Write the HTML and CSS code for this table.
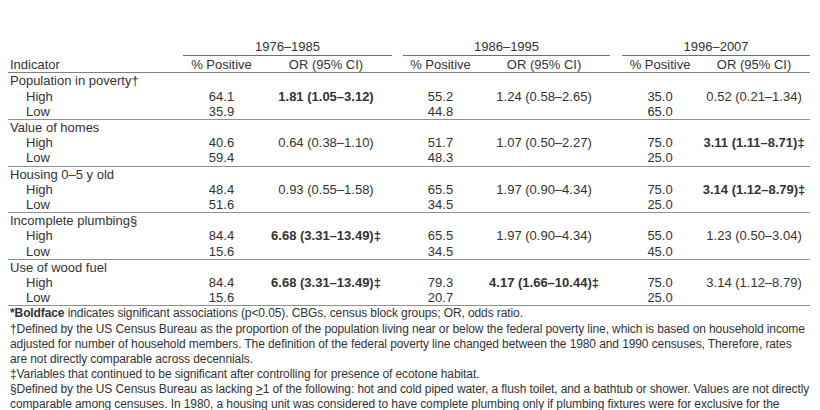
FILE: index.html
```html
<!DOCTYPE html>
<html>
<head>
<meta charset="utf-8">
<link rel="stylesheet" href="styles.css">
</head>
<body>
<div class="page">
<table class="data">
  <colgroup>
    <col class="c-ind"><col class="c-pos1"><col class="c-or1"><col class="c-gap1">
    <col class="c-pos2"><col class="c-or2"><col class="c-gap2"><col class="c-pos3"><col class="c-or3">
  </colgroup>
  <thead>
    <tr class="years">
      <th></th>
      <th colspan="2" class="year">1976–1985</th>
      <th></th>
      <th colspan="2" class="year">1986–1995</th>
      <th></th>
      <th colspan="2" class="year">1996–2007</th>
    </tr>
    <tr class="cols">
      <th class="ind">Indicator</th>
      <th>% Positive</th><th>OR (95% CI)</th><th></th>
      <th>% Positive</th><th>OR (95% CI)</th><th></th>
      <th>% Positive</th><th>OR (95% CI)</th>
    </tr>
  </thead>
  <tbody>
    <tr><td class="ind">Population in poverty†</td><td></td><td></td><td></td><td></td><td></td><td></td><td></td><td></td></tr>
    <tr><td class="sub">High</td><td>64.1</td><td><b>1.81 (1.05–3.12)</b></td><td></td><td>55.2</td><td>1.24 (0.58–2.65)</td><td></td><td>35.0</td><td>0.52 (0.21–1.34)</td></tr>
    <tr class="last"><td class="sub">Low</td><td>35.9</td><td></td><td></td><td>44.8</td><td></td><td></td><td>65.0</td><td></td></tr>

    <tr><td class="ind">Value of homes</td><td></td><td></td><td></td><td></td><td></td><td></td><td></td><td></td></tr>
    <tr><td class="sub">High</td><td>40.6</td><td>0.64 (0.38–1.10)</td><td></td><td>51.7</td><td>1.07 (0.50–2.27)</td><td></td><td>75.0</td><td><b>3.11 (1.11–8.71)‡</b></td></tr>
    <tr class="last"><td class="sub">Low</td><td>59.4</td><td></td><td></td><td>48.3</td><td></td><td></td><td>25.0</td><td></td></tr>

    <tr><td class="ind">Housing 0–5 y old</td><td></td><td></td><td></td><td></td><td></td><td></td><td></td><td></td></tr>
    <tr><td class="sub">High</td><td>48.4</td><td>0.93 (0.55–1.58)</td><td></td><td>65.5</td><td>1.97 (0.90–4.34)</td><td></td><td>75.0</td><td><b>3.14 (1.12–8.79)‡</b></td></tr>
    <tr class="last"><td class="sub">Low</td><td>51.6</td><td></td><td></td><td>34.5</td><td></td><td></td><td>25.0</td><td></td></tr>

    <tr><td class="ind">Incomplete plumbing§</td><td></td><td></td><td></td><td></td><td></td><td></td><td></td><td></td></tr>
    <tr><td class="sub">High</td><td>84.4</td><td><b>6.68 (3.31–13.49)‡</b></td><td></td><td>65.5</td><td>1.97 (0.90–4.34)</td><td></td><td>55.0</td><td>1.23 (0.50–3.04)</td></tr>
    <tr class="last"><td class="sub">Low</td><td>15.6</td><td></td><td></td><td>34.5</td><td></td><td></td><td>45.0</td><td></td></tr>

    <tr><td class="ind">Use of wood fuel</td><td></td><td></td><td></td><td></td><td></td><td></td><td></td><td></td></tr>
    <tr><td class="sub">High</td><td>84.4</td><td><b>6.68 (3.31–13.49)‡</b></td><td></td><td>79.3</td><td><b>4.17 (1.66–10.44)‡</b></td><td></td><td>75.0</td><td>3.14 (1.12–8.79)</td></tr>
    <tr class="last"><td class="sub">Low</td><td>15.6</td><td></td><td></td><td>20.7</td><td></td><td></td><td>25.0</td><td></td></tr>
  </tbody>
</table>
<div class="notes">
  <p><b>*Boldface</b> indicates significant associations (p&lt;0.05). CBGs, census block groups; OR, odds ratio.</p>
  <p>†Defined by the US Census Bureau as the proportion of the population living near or below the federal poverty line, which is based on household income<br>adjusted for number of household members. The definition of the federal poverty line changed between the 1980 and 1990 censuses, Therefore, rates<br>are not directly comparable across decennials.</p>
  <p>‡Variables that continued to be significant after controlling for presence of ecotone habitat.</p>
  <p>§Defined by the US Census Bureau as lacking <u>&gt;</u>1 of the following: hot and cold piped water, a flush toilet, and a bathtub or shower. Values are not directly<br>comparable among censuses. In 1980, a housing unit was considered to have complete plumbing only if plumbing fixtures were for exclusive for the</p>
</div>
</div>
</body>
</html>
```

FILE: styles.css
```css
html, body {
  margin: 0;
  padding: 0;
  background: #ffffff;
}

body {
  font-family: "Liberation Sans", Arial, sans-serif;
  font-size: 13px;
  color: #333333;
}

.page {
  padding: 39px 0 0 8px;
  width: 812px;
}

.data {
  border-collapse: separate;
  border-spacing: 0;
  table-layout: fixed;
  width: 802px;
  line-height: 15.2px;
}

.c-ind { width: 175px; }
.c-pos1 { width: 77px; }
.c-or1 { width: 132px; }
.c-gap1 { width: 11px; }
.c-pos2 { width: 75px; }
.c-or2 { width: 132px; }
.c-gap2 { width: 12px; }
.c-pos3 { width: 76px; }
.c-or3 { width: 112px; }

.data th,
.data td {
  padding: 0;
  font-weight: normal;
  text-align: center;
  white-space: nowrap;
}

.data th.ind,
.data td.ind {
  text-align: left;
  padding-left: 2px;
}

.data td.sub {
  text-align: left;
  padding-left: 18px;
}

.data b {
  font-weight: bold;
}

.years th {
  padding-bottom: 1px;
}

.years th.year {
  border-bottom: 1px solid #6f6f6f;
}

.cols th {
  border-bottom: 1px solid #808080;
  padding-top: 1px;
}

.data tr.last td {
  border-bottom: 1px solid #909090;
}

.notes {
  font-size: 12px;
  letter-spacing: -0.1px;
  line-height: 15.1px;
  white-space: nowrap;
  padding-left: 2px;
}

.notes p {
  margin: 0;
}
```
